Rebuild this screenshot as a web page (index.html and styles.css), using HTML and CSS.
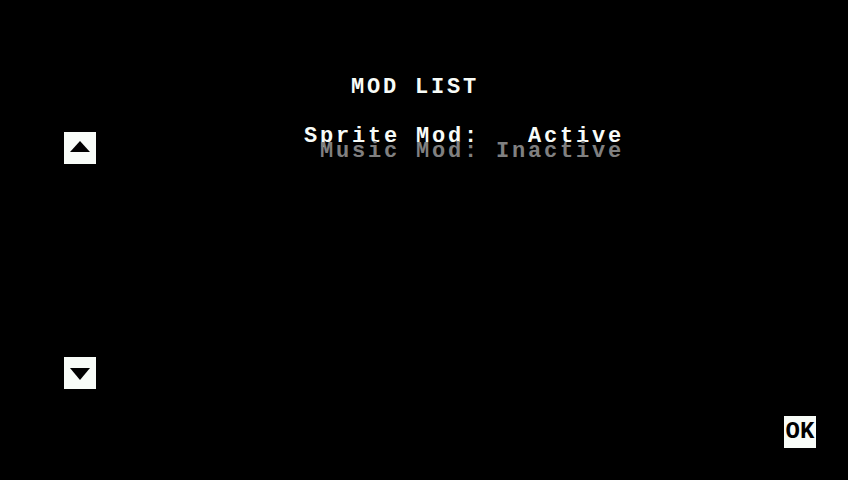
FILE: index.html
```html
<!DOCTYPE html>
<html>
<head>
<meta charset="utf-8">
<link rel="stylesheet" href="styles.css">
</head>
<body>
<div class="screen">
  <div class="title">MOD LIST</div>
  <div class="content">
    <div class="arrows">
      <svg class="btn" width="32" height="32" viewBox="0 0 32 32"><rect width="32" height="32" fill="#f8fcf8"/><polygon points="6,20 26,20 16,9" fill="#000"/></svg>
      <svg class="btn" width="32" height="32" viewBox="0 0 32 32"><rect width="32" height="32" fill="#f8fcf8"/><polygon points="6,11 26,11 16,23" fill="#000"/></svg>
    </div>
    <div class="list">
      <div class="row active">Sprite Mod:   Active</div>
      <div class="row inactive">Music Mod: Inactive</div>
    </div>
  </div>
  <div class="footer">
    <div class="ok">OK</div>
  </div>
</div>
</body>
</html>
```
FILE: styles.css
```css
html, body {
  margin: 0;
  padding: 0;
  background: #000;
}
.screen {
  width: 848px;
  height: 480px;
  display: flex;
  flex-direction: column;
  font-family: "Liberation Mono", monospace;
  font-weight: bold;
  font-size: 22px;
  letter-spacing: 2.8px;
  color: #f8fcf8;
}
.title {
  margin-top: 80px;
  padding-left: 351px;
  line-height: 16px;
}
.content {
  display: flex;
  margin-top: 32px;
}
.arrows {
  display: flex;
  flex-direction: column;
  gap: 193px;
  padding-left: 64px;
  padding-top: 4px;
}
.btn {
  display: block;
}
.list {
  margin-left: 204px;
  width: 324px;
  text-align: right;
  padding-top: 1px;
}
.row {
  white-space: pre;
  line-height: 15px;
}
.inactive {
  color: #808080;
}
.footer {
  margin-top: auto;
  display: flex;
  justify-content: flex-end;
  padding: 0 32px 32px 0;
}
.ok {
  width: 32px;
  height: 32px;
  background: #f8fcf8;
  color: #000;
  font-size: 24px;
  letter-spacing: 0;
  line-height: 32px;
  text-align: center;
}
```
